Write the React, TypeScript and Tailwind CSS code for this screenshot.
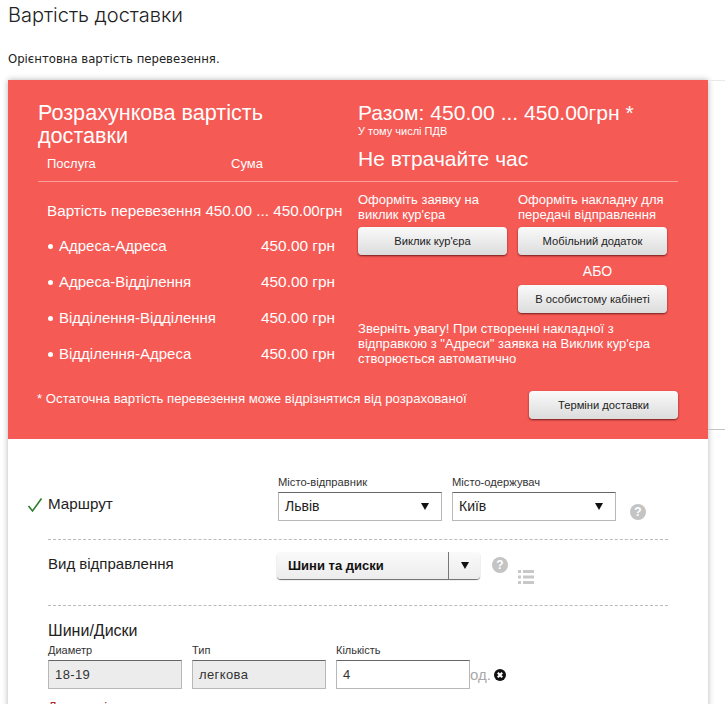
const red = ["#f55a55"]

const services = [
  "Адреса-Адреса",
  "Адреса-Відділення",
  "Відділення-Відділення",
  "Відділення-Адреса",
]

function GrayButton({ label, className }: { label: string; className: string }) {
  return (
    <button className={"h-[28px] rounded-[4px] bg-gradient-to-b from-[#fafafa] to-[#dcdcdc] text-[11.2px] text-[#222] shadow-[0_1px_2px_rgba(90,20,20,0.85)] " + className}>
      {label}
    </button>
  )
}

function HelpIcon({ className }: { className: string }) {
  return (
    <span className={"flex h-[16px] w-[16px] items-center justify-center rounded-full bg-[#c4c4c4] text-[12px] font-bold text-white " + className}>?</span>
  )
}

function CitySelect({ label, value, className }: { label: string; value: string; className: string }) {
  return (
    <div className={className}>
      <div className="text-[11.2px] leading-[13px] text-[#333]">{label}</div>
      <div className="mt-[3px] flex h-[29px] items-center justify-between border border-[#b8b8b8] border-t-[#666] pr-[12px] pl-[6px] text-[14px] text-[#222]">
        <span>{value}</span>
        <span className="h-0 w-0 border-x-[4px] border-t-[7px] border-x-transparent border-t-[#111]" />
      </div>
    </div>
  )
}

function TextField({ label, value, disabled }: { label: string; value: string; disabled?: boolean }) {
  return (
    <div className="w-[134px]">
      <div className="text-[11px] leading-[13px] text-[#333]">{label}</div>
      <div className={"mt-[3px] flex h-[29px] items-center border border-[#b8b8b8] border-t-[#666] pl-[6px] text-[13px] tracking-[0.4px] text-[#333] " + (disabled ? "bg-[#ececec]" : "bg-white")}>
        {value}
      </div>
    </div>
  )
}

export default function App() {
  return (
    <div className="relative h-[704px] w-[725px] overflow-hidden bg-white font-['Liberation_Sans',sans-serif]">
      {/* side rules next to the panel */}
      <div className="absolute top-[80px] right-0 h-px w-[17px] bg-[#e8e8e8]" />
      <div className="absolute top-[429px] right-0 h-px w-[17px] bg-[#c4c4c4]" />

      <div className="pl-[8px]">
        <h1 className="pt-[2px] font-['Inter',sans-serif] text-[20px] leading-[26px] font-light text-[#222]">Вартість доставки</h1>
        <p className="pt-[22px] font-['DejaVu_Sans',sans-serif] text-[11.7px] leading-[18px] text-[#222]">Орієнтовна вартість перевезення.</p>
      </div>

      <div className="mt-[12px] ml-[8px] w-[700px] shadow-[0_0_6px_rgba(0,0,0,0.3)]">
        {/* Red summary */}
        <div className="h-[359px] px-[30px] pt-[21px] text-white" style={{ backgroundColor: red[0] }}>
          <div className="flex h-[80px]">
            <div className="w-[320px]">
              <h2 className="w-[300px] text-[21.6px] leading-[23px]">Розрахункова вартість доставки</h2>
              <div className="mt-[9px] flex text-[13px] leading-[16px]">
                <span className="ml-[9px] w-[184px]">Послуга</span>
                <span>Сума</span>
              </div>
            </div>
            <div>
              <div className="text-[21.1px] leading-[23px]">Разом: 450.00 ... 450.00грн *</div>
              <div className="text-[11px] leading-[14px]">У тому числі ПДВ</div>
              <div className="mt-[9px] text-[21px] leading-[23px]">Не втрачайте час</div>
            </div>
          </div>

          <div className="h-px w-[640px] bg-[#f9a09c]" />

          <div className="flex">
            <div className="w-[320px] pl-[9px]">
              <div className="pt-[20px] text-[15.25px] leading-[18px] whitespace-nowrap">Вартість перевезення 450.00 ... 450.00грн</div>
              <ul className="pt-[8px]">
                {services.map((name) => (
                  <li key={name} className="flex h-[36px] items-center text-[15.4px]">
                    <span className="flex w-[214px] items-center text-[15px]">
                      <span className="mr-[6px] ml-[1px] h-[5px] w-[5px] rounded-full bg-white" />
                      {name}
                    </span>
                    <span>450.00 грн</span>
                  </li>
                ))}
              </ul>
            </div>
            <div className="w-[320px] pt-[10px]">
              <div className="flex gap-[11px] text-[13px] leading-[15px]">
                <div className="w-[149px]">
                  <p className="h-[30px]">Оформіть заявку на виклик кур'єра</p>
                  <GrayButton label="Виклик кур'єра" className="mt-[5px] w-[149px]" />
                </div>
                <div className="w-[149px]">
                  <p className="h-[30px] whitespace-nowrap">Оформіть накладну для<br />передачі відправлення</p>
                  <GrayButton label="Мобільний додаток" className="mt-[5px] w-[149px]" />
                  <div className="mt-[7px] pl-[10px] text-center text-[14px] leading-[18px]">АБО</div>
                  <GrayButton label="В особистому кабінеті" className="mt-[5px] w-[149px]" />
                </div>
              </div>
              <p className="mt-[8px] w-[310px] text-[13.1px] leading-[15px]">Зверніть увагу! При створенні накладної з відправкою з "Адреси" заявка на Виклик кур'єра створюється автоматично</p>
            </div>
          </div>

          <div className="mt-[19px] flex items-start justify-between">
            <span className="-ml-px text-[13.2px] leading-[15px]">* Остаточна вартість перевезення може відрізнятися від розрахованої</span>
            <GrayButton label="Терміни доставки" className="w-[149px]" />
          </div>
        </div>

        {/* Form */}
        <div className="h-[270px] px-[40px]">
          <div className="relative flex h-[101px] border-b border-dashed border-[#bbb]">
            <svg className="absolute top-[58px] -left-[21px]" width="16" height="16" viewBox="0 0 16 16" fill="none">
              <path d="M1.5 9 L5.5 14 L14.5 1.5" stroke="#2f7d2f" strokeWidth="1.6" />
            </svg>
            <span className="w-[230px] pt-[56px] text-[15.2px] leading-[18px] text-[#222]">Маршрут</span>
            <CitySelect label="Місто-відправник" value="Львів" className="w-[164px] pt-[37px]" />
            <CitySelect label="Місто-одержувач" value="Київ" className="ml-[10px] w-[164px] pt-[37px]" />
            <HelpIcon className="mt-[65px] ml-[14px]" />
          </div>

          <div className="relative flex h-[66px] border-b border-dashed border-[#bbb]">
            <span className="w-[229px] pt-[15px] text-[15px] leading-[18px] text-[#222]">Вид відправлення</span>
            <div className="mt-[12px] flex h-[27px] w-[203px] rounded-[4px] bg-gradient-to-b from-[#fafafa] to-[#ececec] shadow-[0_1px_1px_rgba(0,0,0,0.6)]">
              <span className="flex-1 border-r border-[#777] pt-[5px] pl-[11px] text-[13px] leading-[17px] font-bold text-[#111]">Шини та диски</span>
              <span className="flex w-[31px] items-center justify-center">
                <span className="h-0 w-0 border-x-[4px] border-t-[7px] border-x-transparent border-t-[#111]" />
              </span>
            </div>
            <HelpIcon className="mt-[17px] ml-[12px]" />
            <svg className="mt-[29px] ml-[10px]" width="16" height="16" viewBox="0 0 16 16" fill="#c8c8c8">
              <rect x="0" y="1" width="3" height="3" />
              <rect x="5" y="1" width="11" height="3" />
              <rect x="0" y="6.5" width="3" height="3" />
              <rect x="5" y="6.5" width="11" height="3" />
              <rect x="0" y="12" width="3" height="3" />
              <rect x="5" y="12" width="11" height="3" />
            </svg>
          </div>

          <div className="pt-[16px] text-[16px] leading-[18px] text-[#222]">Шини/Диски</div>
          <div className="mt-[4px] flex items-start gap-[10px]">
            <TextField label="Диаметр" value="18-19" disabled />
            <TextField label="Тип" value="легкова" disabled />
            <div className="flex items-end">
              <TextField label="Кількість" value="4" />
              <span className="pb-[6px] text-[15px] leading-[16px] text-[#aaa]">од.</span>
              <svg className="mb-[8px] ml-[3px]" width="12" height="12" viewBox="0 0 12 12">
                <circle cx="6" cy="6" r="6" fill="#111" />
                <path d="M3.8 3.8 L8.2 8.2 M8.2 3.8 L3.8 8.2" stroke="#fff" strokeWidth="2.2" />
              </svg>
            </div>
          </div>
          <div className="mt-[10px] text-[13px] leading-[15px] text-[#b22222]">Додаткові</div>
        </div>
      </div>
    </div>
  )
}
